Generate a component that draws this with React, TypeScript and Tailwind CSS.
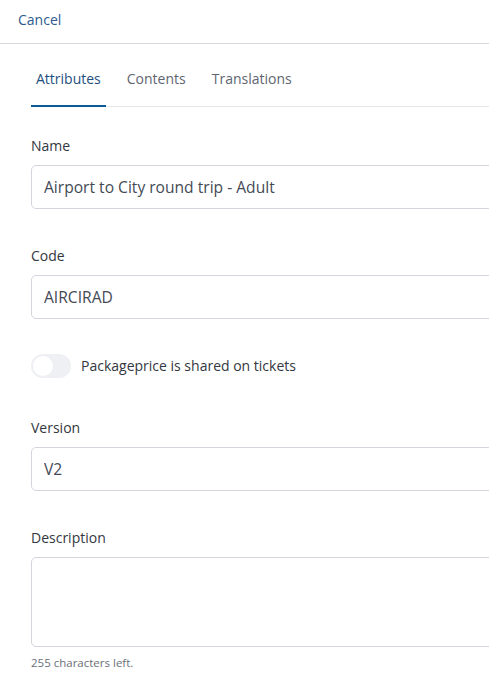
import React, { useState } from 'react';

const font = { fontFamily: '"Open Sans", "Liberation Sans", sans-serif' };

const Field: React.FC<{ label: string; value: string; className?: string }> = ({ label, value, className }) => (
  <div className={className}>
    <div className="text-[14px] leading-5 text-[#333740]">{label}</div>
    <input
      readOnly
      value={value}
      className="mt-[9px] h-[44px] w-[520px] rounded-[5px] border border-[#d3d6de] bg-white px-3 text-[15.6px] text-[#444a55] outline-none"
    />
  </div>
);

export default function App() {
  const [shared, setShared] = useState(false);
  const tabs = ['Attributes', 'Contents', 'Translations'];

  return (
    <div className="min-h-[685px] w-full overflow-hidden bg-white" style={font}>
      <div className="flex h-[44px] items-start border-b border-[#d6d8de] px-[18px] pt-[10px]">
        <button className="text-[14px] leading-5 text-[#2d5b8e]">Cancel</button>
      </div>

      <div className="pl-[31px]">
        <div className="flex gap-[16px] border-b border-[#e6e7eb]">
          {tabs.map((t, i) => (
            <div
              key={t}
              className={
                i === 0
                  ? '-mb-px border-b-2 border-[#0b5a9c] px-[5px] pt-[25px] pb-[16px] text-[14px] leading-5 text-[#1f4f80]'
                  : '-mb-px border-b-2 border-transparent px-[5px] pt-[25px] pb-[16px] text-[14px] leading-5 text-[#5e6571]'
              }
            >
              {t}
            </div>
          ))}
        </div>

        <Field label="Name" value="Airport to City round trip - Adult" className="mt-[29px]" />
        <Field label="Code" value="AIRCIRAD" className="mt-[37px]" />

        <div className="mt-[35px] flex items-center gap-[10px]">
          <button
            onClick={() => setShared(!shared)}
            className="relative h-[24px] w-[40px] rounded-full bg-[#eef0f4]"
            aria-label="Packageprice is shared on tickets"
          >
            <span className="absolute left-[2px] top-[2px] h-[20px] w-[20px] rounded-full bg-white" />
          </button>
          <span className="text-[14px] leading-5 text-[#333740]">Packageprice is shared on tickets</span>
        </div>

        <Field label="Version" value="V2" className="mt-[40px]" />

        <div className="mt-[37px]">
          <div className="text-[14px] leading-5 text-[#333740]">Description</div>
          <textarea
            readOnly
            className="mt-[9px] block h-[90px] w-[520px] resize-none rounded-[5px] border border-[#d3d6de] bg-white px-3 py-2 text-[15px] outline-none"
          />
          <div className="mt-[8px] text-[11.5px] leading-4 text-[#6b7079]">255 characters left.</div>
        </div>
      </div>
    </div>
  );
}
